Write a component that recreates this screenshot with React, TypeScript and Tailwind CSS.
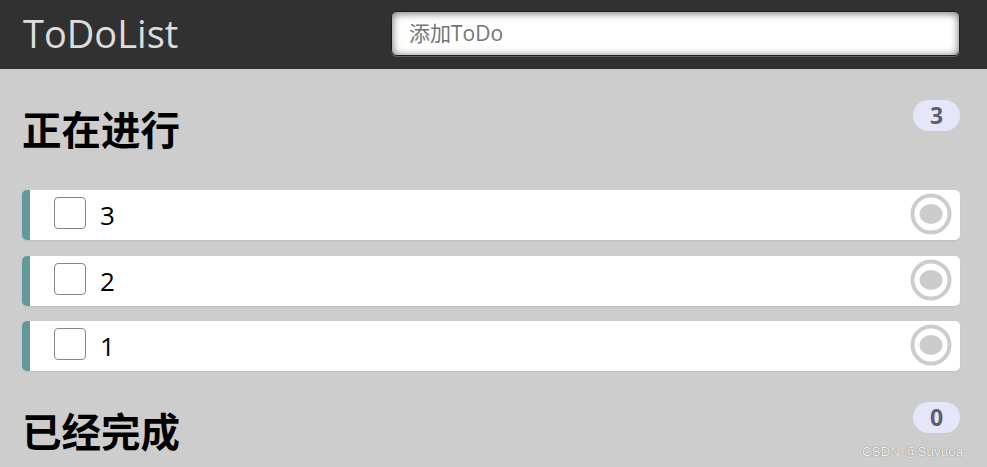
import React from "react";

const font = { fontFamily: '"Open Sans", "Noto Sans CJK SC", sans-serif' };

function Ring() {
  return (
    <svg width="42" height="42" viewBox="0 0 42 42" className="absolute right-[8px] top-[3px]">
      <circle cx="21" cy="21" r="18.5" fill="none" stroke="#cccccc" strokeWidth="4" />
      <ellipse cx="21" cy="21" rx="11.5" ry="10" fill="#cccccc" />
    </svg>
  );
}

function Item({ text }: { text: string }) {
  return (
    <li className="relative h-[50px] rounded-[5px] bg-white border-l-[8px] border-[#629a9c] shadow-[0_1px_2px_rgba(0,0,0,0.07)]">
      <span className="absolute left-[24px] top-[7px] w-[32px] h-[32px] rounded-[4px] border-[1.5px] border-[#858585] bg-white" />
      <span className="absolute left-[70px] top-0 leading-[50px] text-[26px] text-black">{text}</span>
      <Ring />
    </li>
  );
}

function Heading({ title, count }: { title: string; count: number }) {
  return (
    <h2 className="relative h-[90px]">
      <span className="block pt-[2px] leading-[56px] text-[39.5px] font-bold text-black">{title}</span>
      <span className="absolute right-0 top-0 w-[47px] h-[31px] rounded-full bg-[#e6e6fa] text-[#5e5e6e] text-[23px] font-bold leading-[31px] text-center">
        {count}
      </span>
    </h2>
  );
}

export default function App() {
  return (
    <div className="relative h-[467px] overflow-hidden bg-[#cdcdcd]" style={font}>
      <header className="h-[69px] bg-[#313131]">
        <div className="ml-[22px] w-[938px] h-full flex items-center justify-between">
          <div className="text-[38px] text-[#dddddd] leading-none pl-[1px] pb-[3px]">ToDoList</div>
          <div className="mb-[2px] w-[569px] h-[45px] rounded-[6px] bg-white pl-[17px] flex items-center text-[21px] text-[#757575] shadow-[0_1px_0_rgba(255,255,255,0.24),inset_0_1px_8px_rgba(0,0,0,0.6)] border border-[#1e1e1e]">
            添加ToDo
          </div>
        </div>
      </header>
      <main className="ml-[22px] w-[938px] pt-[31px]">
        <section>
          <Heading title="正在进行" count={3} />
          <ul className="flex flex-col gap-[15.5px] mb-[31px]">
            <Item text="3" />
            <Item text="2" />
            <Item text="1" />
          </ul>
        </section>
        <section>
          <Heading title="已经完成" count={0} />
          <ul />
        </section>
      </main>
      <div
        className="absolute left-[862px] top-[442px] text-[13px] tracking-[0.3px] text-[#f4f4f4] [text-shadow:0_0_1px_#555]"
        style={{ fontFamily: '"Liberation Sans", sans-serif' }}
      >
        CSDN @Suyuoa
      </div>
    </div>
  );
}
